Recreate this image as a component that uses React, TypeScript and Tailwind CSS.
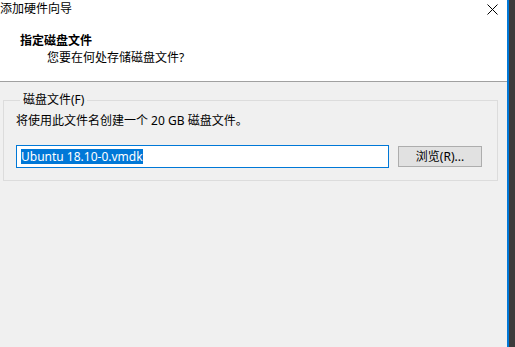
export default function App() {
  const font = { fontFamily: '"Noto Sans", "Noto Sans CJK SC", sans-serif' };
  return (
    <div className="flex h-[347px] w-[515px] overflow-hidden text-[12px] leading-[16px] text-black" style={font}>
      {/* dialog */}
      <div className="flex w-[507px] flex-col bg-[#f0f0f0]">
        {/* header */}
        <div className="relative h-[82px] shrink-0 border-b border-[#a0a0a0] bg-white">
          <div className="pt-[1px] pl-0">添加硬件向导</div>
          <button className="absolute right-[9px] top-[3px] flex h-[12px] w-[12px] items-center justify-center">
            <svg width="11" height="11" viewBox="0 0 11 11">
              <path d="M0.5 0.5 L10.5 10.5 M10.5 0.5 L0.5 10.5" stroke="#000" strokeWidth="1" />
            </svg>
          </button>
          <div className="mt-[16px] pl-[20px] font-bold">指定磁盘文件</div>
          <div className="pl-[47px] pt-[1px]">您要在何处存储磁盘文件?</div>
        </div>

        {/* body */}
        <div className="pl-[3px] pt-[10px]">
          <fieldset className="w-[495px] border border-[#dcdcdc] px-[12px] pb-[12px]">
            <legend className="ml-[4px] px-[3px]">磁盘文件(F)</legend>
            <div className="mt-[5px]">将使用此文件名创建一个 20 GB 磁盘文件。</div>
            <div className="mt-[16px] flex items-center gap-[9px]">
              <div className="flex h-[23px] w-[373px] items-center border border-[#0078d7] bg-white pl-[4px]">
                <span className="bg-[#0078d7] px-[0px] leading-[15px] text-white">Ubuntu 18.10-0.vmdk</span>
              </div>
              <button className="h-[21px] w-[84px] border border-[#adadad] bg-[#e1e1e1] text-[12px] leading-[16px]">
                浏览(R)...
              </button>
            </div>
          </fieldset>
        </div>
      </div>
      <div className="w-[2px] bg-[#0078d7]" />
      <div className="flex-1 bg-[#3c3c3c]" />
    </div>
  );
}
